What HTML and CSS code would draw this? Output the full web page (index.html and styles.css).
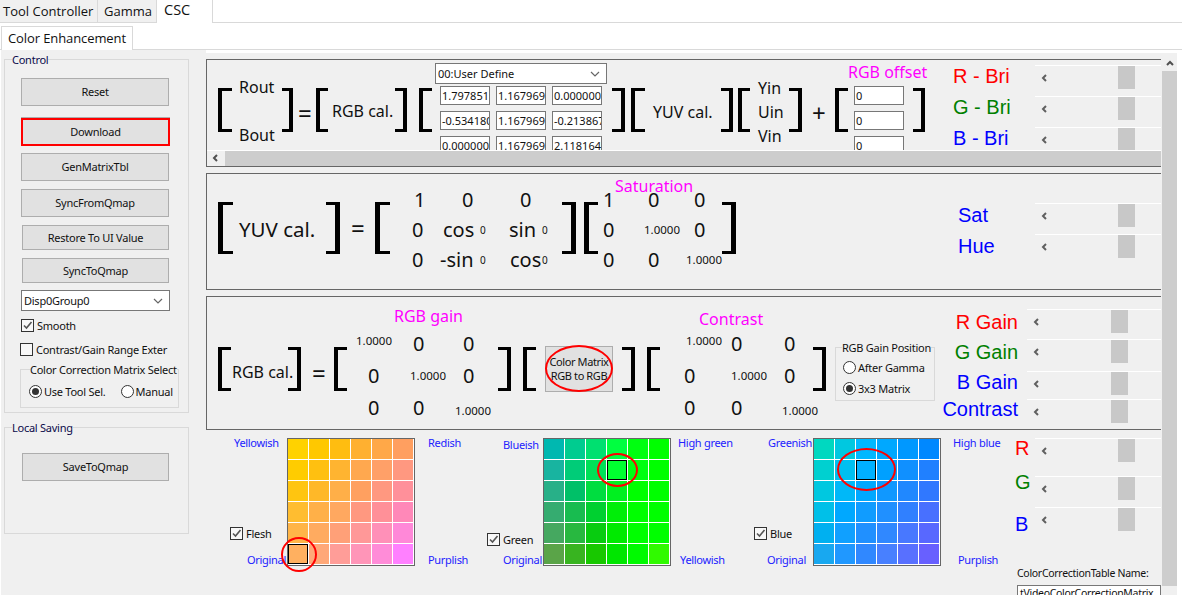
FILE: index.html
```html
<!DOCTYPE html>
<html lang="en">
<head>
<meta charset="utf-8">
<title>CSC - Color Enhancement</title>
<link rel="stylesheet" href="styles.css">
</head>
<body>
<div class="app">
  <div class="tabs">
    <div class="tab t-tool">Tool Controller</div>
    <div class="tab t-gamma">Gamma</div>
    <div class="tab active t-csc">CSC</div>
  </div>
  <div class="subtabs">
    <div class="subtab">Color Enhancement</div>
  </div>
  <div class="page">
    <aside class="sidebar">
      <fieldset class="group g-control">
        <legend>Control</legend>
        <button class="btn mt12">Reset</button>
        <button class="btn btn-red">Download</button>
        <button class="btn mt7">GenMatrixTbl</button>
        <button class="btn mt8">SyncFromQmap</button>
        <button class="btn btn-short mt8">Restore To UI Value</button>
        <button class="btn btn-short mt8">SyncToQmap</button>
        <div class="combo c-disp">Disp0Group0<svg class="chev" width="10" height="6" viewBox="0 0 10 6"><path d="M1 1 5 5 9 1" fill="none" stroke="#666" stroke-width="1.2"/></svg></div>
        <label class="check c-smooth"><span class="cb"><svg width="11" height="11" viewBox="0 0 11 11"><path d="M2 5.500 4.500 8 9.500 2" fill="none" stroke="#555" stroke-width="1.600"/></svg></span>Smooth</label>
        <label class="check c-range"><span class="cb"></span>Contrast/Gain Range Exter</label>
        <fieldset class="group g-matrix">
          <legend>Color Correction Matrix Select</legend>
          <div class="radios">
            <label class="radio"><span class="rd on"></span>Use Tool Sel.</label>
            <label class="radio r-manual"><span class="rd"></span>Manual</label>
          </div>
        </fieldset>
      </fieldset>
      <fieldset class="group g-local">
        <legend>Local Saving</legend>
        <button class="btn btn-save">SaveToQmap</button>
      </fieldset>
    </aside>

    <main class="content">
      <section class="panel p1">
        <div class="p1-clip">
          <div class="row">
            <i class="br ml11 w14"></i>
            <div class="stack ml7 w43 gap24 mt2"><span>Rout</span><span>Bout</span></div>
            <i class="br r w11"></i>
            <span class="op ml5 w13 mt6">=</span>
            <i class="br ml5 w12"></i>
            <span class="math ml4 w63 mt2">RGB cal.</span>
            <i class="br r w12"></i>
            <i class="br ml12 w13"></i>
            <div class="coef ml3">
              <div class="combo c-user">00:User Define<svg class="chev" width="10" height="6" viewBox="0 0 10 6"><path d="M1 1 5 5 9 1" fill="none" stroke="#666" stroke-width="1.2"/></svg></div>
              <div class="inputs">
                <span class="inp">1.797851</span><span class="inp">1.167969</span><span class="inp">0.000000</span>
                <span class="inp">-0.534180</span><span class="inp">1.167969</span><span class="inp">-0.213867</span>
                <span class="inp">0.000000</span><span class="inp">1.167969</span><span class="inp">2.118164</span>
              </div>
            </div>
            <i class="br r ml5 w13"></i>
            <i class="br ml6 w14"></i>
            <span class="math ml8 w60 mt4">YUV cal.</span>
            <i class="br r ml8 w12"></i>
            <i class="br ml5 w12"></i>
            <div class="stack ml8 w23 mt4"><span>Yin</span><span>Uin</span><span>Vin</span></div>
            <i class="br r ml8 w13"></i>
            <span class="op ml10 w13 mt6">+</span>
            <i class="br ml10 w13"></i>
            <div class="offset">
              <div class="title t-offset">RGB offset</div>
              <span class="inp off">0</span><span class="inp off">0</span><span class="inp off">0</span>
            </div>
            <i class="br r w12"></i>
            <div class="sliders s-bri">
              <div class="sl-row"><span class="lab red">R - Bri</span><div class="slider"><svg class="arr" width="6" height="8" viewBox="0 0 6 8"><path d="M5 1 2 4 5 7" fill="none" stroke="#606060" stroke-width="2"/></svg><b class="thumb"></b></div></div>
              <div class="sl-row"><span class="lab green">G - Bri</span><div class="slider"><svg class="arr" width="6" height="8" viewBox="0 0 6 8"><path d="M5 1 2 4 5 7" fill="none" stroke="#606060" stroke-width="2"/></svg><b class="thumb"></b></div></div>
              <div class="sl-row"><span class="lab blue">B - Bri</span><div class="slider"><svg class="arr" width="6" height="8" viewBox="0 0 6 8"><path d="M5 1 2 4 5 7" fill="none" stroke="#606060" stroke-width="2"/></svg><b class="thumb"></b></div></div>
            </div>
          </div>
        </div>
        <div class="hscroll"><svg class="harr" width="6" height="8" viewBox="0 0 6 8"><path d="M5 1 2 4 5 7" fill="none" stroke="#505050" stroke-width="2"/></svg><b class="hthumb"></b></div>
      </section>

      <section class="panel p2">
        <div class="row">
          <i class="br ml11 w15"></i>
          <span class="math big ml6 w87 mt2">YUV cal.</span>
          <i class="br r w14"></i>
          <span class="op ml11 w12">=</span>
          <i class="br ml12 w15"></i>
          <div class="mx mxa ml22">
            <span class="num i2">1</span><span class="num i22">0</span><span class="num i11">0</span>
            <span class="num">0</span><span class="num i3 fn"><em class="w37">cos</em><small>0</small></span><span class="num fn"><em class="w33">sin</em><small>0</small></span>
            <span class="num">0</span><span class="num fn"><em class="w40">-sin</em><small>0</small></span><span class="num i1 fn"><em class="w32">cos</em><small>0</small></span>
          </div>
          <i class="br r w14"></i>
          <i class="br ml8 w14"></i>
          <div class="satcol ml5">
            <div class="title t-sat">Saturation</div>
            <div class="mx mxb">
              <span class="num">1</span><span class="num i4">0</span><span class="num i8">0</span>
              <span class="num">0</span><span class="small">1.0000</span><span class="num i8">0</span>
              <span class="num">0</span><span class="num i4">0</span><span class="small">1.0000</span>
            </div>
          </div>
          <i class="br r w14"></i>
          <div class="sliders s-sat">
            <div class="sl-row"><span class="lab blue">Sat</span><div class="slider"><svg class="arr" width="6" height="8" viewBox="0 0 6 8"><path d="M5 1 2 4 5 7" fill="none" stroke="#606060" stroke-width="2"/></svg><b class="thumb"></b></div></div>
            <div class="sl-row"><span class="lab blue">Hue</span><div class="slider"><svg class="arr" width="6" height="8" viewBox="0 0 6 8"><path d="M5 1 2 4 5 7" fill="none" stroke="#606060" stroke-width="2"/></svg><b class="thumb"></b></div></div>
          </div>
        </div>
      </section>

      <section class="panel p3">
        <div class="row">
          <i class="br ml11 w13"></i>
          <span class="math ml1 w56 mt6">RGB cal.</span>
          <i class="br r w13"></i>
          <span class="op ml11 w12 mt8">=</span>
          <i class="br ml10 w13"></i>
          <div class="gaincol ml9">
            <div class="title t-gain">RGB gain</div>
            <div class="mx mxc">
              <span class="small up">1.0000</span><span class="num i3">0</span><span class="num i8">0</span>
              <span class="num i12">0</span><span class="small">1.0000</span><span class="num i8">0</span>
              <span class="num i12">0</span><span class="num i3">0</span><span class="small dn">1.0000</span>
            </div>
          </div>
          <i class="br r ml6 w13"></i>
          <i class="br ml12 w13"></i>
          <button class="cm-btn ml9">Color Matrix<br>RGB to RGB<span class="ring r-btn"></span></button>
          <i class="br r ml9 w13"></i>
          <i class="br ml12 w13"></i>
          <div class="concol ml24">
            <div class="title t-con">Contrast</div>
            <div class="mx mxd">
              <span class="small i2 up">1.0000</span><span class="num">0</span><span class="num i2">0</span>
              <span class="num">0</span><span class="small">1.0000</span><span class="num i2">0</span>
              <span class="num">0</span><span class="num">0</span><span class="small dn">1.0000</span>
            </div>
          </div>
          <i class="br r w13"></i>
          <fieldset class="group g-gain">
            <legend>RGB Gain Position</legend>
            <label class="radio"><span class="rd"></span>After Gamma</label>
            <label class="radio r-3x3"><span class="rd on"></span>3x3 Matrix</label>
          </fieldset>
          <div class="sliders s-gain">
            <div class="sl-row h30"><span class="lab red lh26">R Gain</span><div class="slider"><svg class="arr" width="6" height="8" viewBox="0 0 6 8"><path d="M5 1 2 4 5 7" fill="none" stroke="#606060" stroke-width="2"/></svg><b class="thumb"></b></div></div>
            <div class="sl-row h32"><span class="lab green lh26">G Gain</span><div class="slider"><svg class="arr" width="6" height="8" viewBox="0 0 6 8"><path d="M5 1 2 4 5 7" fill="none" stroke="#606060" stroke-width="2"/></svg><b class="thumb"></b></div></div>
            <div class="sl-row h28"><span class="lab blue lh22">B Gain</span><div class="slider"><svg class="arr" width="6" height="8" viewBox="0 0 6 8"><path d="M5 1 2 4 5 7" fill="none" stroke="#606060" stroke-width="2"/></svg><b class="thumb"></b></div></div>
            <div class="sl-row"><span class="lab blue lh20">Contrast</span><div class="slider"><svg class="arr" width="6" height="8" viewBox="0 0 6 8"><path d="M5 1 2 4 5 7" fill="none" stroke="#606060" stroke-width="2"/></svg><b class="thumb"></b></div></div>
          </div>
        </div>
      </section>

      <section class="bottom">
        <div class="block b1">
          <div class="side w57">
            <span class="hue-l ml4">Yellowish</span>
            <label class="check c-tone mb13"><span class="cb"><svg width="11" height="11" viewBox="0 0 11 11"><path d="M2 5.500 4.500 8 9.500 2" fill="none" stroke="#555" stroke-width="1.600"/></svg></span>Flesh</label>
            <span class="hue-l ml17">Original</span>
          </div>
          <div class="swatch">
            <span style="background:#ffd200"></span><span style="background:#ffc800"></span><span style="background:#ffbd10"></span><span style="background:#ffb030"></span><span style="background:#ffa848"></span><span style="background:#ff9f60"></span>
            <span style="background:#ffcc00"></span><span style="background:#ffc010"></span><span style="background:#ffb430"></span><span style="background:#ffa84f"></span><span style="background:#ffa068"></span><span style="background:#ff9880"></span>
            <span style="background:#ffc510"></span><span style="background:#ffb828"></span><span style="background:#ffaf48"></span><span style="background:#ffa060"></span><span style="background:#ff9880"></span><span style="background:#ff909a"></span>
            <span style="background:#ffbd30"></span><span style="background:#ffb048"></span><span style="background:#ffa860"></span><span style="background:#ff9880"></span><span style="background:#ff9098"></span><span style="background:#ff88b8"></span>
            <span style="background:#ffb548"></span><span style="background:#ffab60"></span><span style="background:#ffa078"></span><span style="background:#ff9898"></span><span style="background:#ff90b8"></span><span style="background:#ff88d8"></span>
            <span class="sel" style="background:#ffb060"></span><span style="background:#ffa878"></span><span style="background:#ff9d98"></span><span style="background:#ff95b8"></span><span style="background:#ff8cd8"></span><span style="background:#ff80ff"></span>
            <b class="ring r-flesh"></b>
          </div>
          <div class="side w72 pl13">
            <span class="hue-l">Redish</span>
            <span class="hue-l">Purplish</span>
          </div>
        </div>
        <div class="block b2">
          <div class="side w56">
            <span class="hue-l ml16 mt2">Blueish</span>
            <label class="check c-tone mb7"><span class="cb"><svg width="11" height="11" viewBox="0 0 11 11"><path d="M2 5.500 4.500 8 9.500 2" fill="none" stroke="#555" stroke-width="1.600"/></svg></span>Green</label>
            <span class="hue-l ml16">Original</span>
          </div>
          <div class="swatch">
            <span style="background:#00b8b0"></span><span style="background:#00cc90"></span><span style="background:#00e070"></span><span style="background:#00ff40"></span><span style="background:#00ff10"></span><span style="background:#00ff00"></span>
            <span style="background:#18b4a0"></span><span style="background:#00cc78"></span><span style="background:#00e058"></span><span class="sel" style="background:#00ff30"></span><span style="background:#00ff10"></span><span style="background:#00ff00"></span>
            <span style="background:#28b088"></span><span style="background:#00c068"></span><span style="background:#00dd40"></span><span style="background:#00f020"></span><span style="background:#00ff00"></span><span style="background:#00ff00"></span>
            <span style="background:#35ac70"></span><span style="background:#18bc50"></span><span style="background:#00d030"></span><span style="background:#00ee08"></span><span style="background:#00ff00"></span><span style="background:#00ff00"></span>
            <span style="background:#45a860"></span><span style="background:#28b840"></span><span style="background:#08cc10"></span><span style="background:#00ea00"></span><span style="background:#00ff00"></span><span style="background:#00ff00"></span>
            <span style="background:#5aa448"></span><span style="background:#38b420"></span><span style="background:#18c800"></span><span style="background:#00e600"></span><span style="background:#00fa00"></span><span style="background:#30fa00"></span>
            <b class="ring r-green"></b>
          </div>
          <div class="side w83 pl7">
            <span class="hue-l">High green</span>
            <span class="hue-l ml2">Yellowish</span>
          </div>
        </div>
        <div class="block b3">
          <div class="side w59">
            <span class="hue-l ml14">Greenish</span>
            <label class="check c-tone mb13"><span class="cb"><svg width="11" height="11" viewBox="0 0 11 11"><path d="M2 5.500 4.500 8 9.500 2" fill="none" stroke="#555" stroke-width="1.600"/></svg></span>Blue</label>
            <span class="hue-l ml13">Original</span>
          </div>
          <div class="swatch">
            <span style="background:#00d8c0"></span><span style="background:#00c8e0"></span><span style="background:#00b8ff"></span><span style="background:#00a8ff"></span><span style="background:#0098ff"></span><span style="background:#0088ff"></span>
            <span style="background:#00d0d0"></span><span style="background:#00c0f0"></span><span class="sel" style="background:#00b0ff"></span><span style="background:#00a0ff"></span><span style="background:#1090ff"></span><span style="background:#2080ff"></span>
            <span style="background:#00c8e0"></span><span style="background:#00b8f8"></span><span style="background:#00a8ff"></span><span style="background:#1098ff"></span><span style="background:#2088ff"></span><span style="background:#3078ff"></span>
            <span style="background:#00c0e8"></span><span style="background:#00a8ff"></span><span style="background:#109cff"></span><span style="background:#2090ff"></span><span style="background:#3080ff"></span><span style="background:#4870ff"></span>
            <span style="background:#00b0f0"></span><span style="background:#10a0ff"></span><span style="background:#2090ff"></span><span style="background:#3088ff"></span><span style="background:#4878ff"></span><span style="background:#5868ff"></span>
            <span style="background:#18a8f0"></span><span style="background:#2098ff"></span><span style="background:#3088ff"></span><span style="background:#4880ff"></span><span style="background:#5870ff"></span><span style="background:#6860ff"></span>
            <b class="ring r-blue"></b>
          </div>
          <div class="side w74 pl12">
            <span class="hue-l">High blue</span>
            <span class="hue-l ml5">Purplish</span>
          </div>
        </div>
        <div class="tail">
          <div class="tail-top">
            <div class="rgb-labs">
              <span class="lab red">R</span>
              <span class="lab green">G</span>
              <span class="lab blue">B</span>
            </div>
            <div class="rgb-sliders">
              <div class="slider h38"><svg class="arr" width="6" height="8" viewBox="0 0 6 8"><path d="M5 1 2 4 5 7" fill="none" stroke="#606060" stroke-width="2"/></svg><b class="thumb"></b></div>
              <div class="slider"><svg class="arr" width="6" height="8" viewBox="0 0 6 8"><path d="M5 1 2 4 5 7" fill="none" stroke="#606060" stroke-width="2"/></svg><b class="thumb"></b></div>
              <div class="slider"><svg class="arr" width="6" height="8" viewBox="0 0 6 8"><path d="M5 1 2 4 5 7" fill="none" stroke="#606060" stroke-width="2"/></svg><b class="thumb"></b></div>
            </div>
          </div>
          <div class="tbl-name">ColorCorrectionTable Name:</div>
          <div class="tbl-input">tVideoColorCorrectionMatrix</div>
        </div>
      </section>
    </main>

    <div class="vscroll">
      <svg class="varr" width="8" height="6" viewBox="0 0 8 6"><path d="M1 5 4 2 7 5" fill="none" stroke="#505050" stroke-width="2"/></svg>
      <b class="vthumb"></b>
    </div>
  </div>
</div>
</body>
</html>
```

FILE: styles.css
```css
* { box-sizing: border-box; }
html, body { margin: 0; padding: 0; background: #fff; }
body { font-family: "Noto Sans", "Open Sans", sans-serif; color: #000; }
.app { width: 1182px; height: 595px; overflow: hidden; background: #fff; display: flex; flex-direction: column; }

/* tabs */
.tabs { display: flex; height: 23px; border-bottom: 1px solid #d9d9d9; flex: none; }
.tab { height: 22px; font: 13px/22px "Open Sans", sans-serif; background: #f0f0f0; border: 1px solid #d9d9d9; border-width: 0 1px 0 0; padding-left: 3px; color: #111; }
.t-tool { width: 98px; }
.t-gamma { width: 59px; padding-left: 6px; }
.tab.active { background: #fff; width: 56px; height: 23px; padding-left: 7px; font-size: 14.500px; line-height: 19px; }
.subtabs { height: 27px; flex: none; display: flex; align-items: flex-end; border-bottom: 1px solid #d9d9d9; padding: 0 0 0 1px; }
.subtab { width: 132px; height: 24px; margin-bottom: -1px; background: #fff; border: 1px solid #d9d9d9; border-bottom: 0; font: 13px/22px "Open Sans", sans-serif; letter-spacing: -0.1px; padding-left: 6px; color: #111; }

/* page */
.page { flex: 1; display: flex; margin: 0 5px 0 1px; background: #f0f0f0; min-height: 0; }
.sidebar { width: 205px; flex: none; padding: 3px 0 0 3px; font-size: 11px; letter-spacing: -0.25px; }
.content { width: 956px; flex: none; border-top: 3px solid #fff; }
.vscroll { width: 15px; flex: none; display: flex; flex-direction: column; border-top: 3px solid #fff; }
.varr { margin: 7px 0 5px 4px; flex: none; }
.vthumb { display: block; height: 515px; background: #cdcdcd; }

/* groups */
.group { margin: 0; padding: 0; border: 1px solid #d9d9d9; font-size: 11px; line-height: 13px; min-width: 0; letter-spacing: -0.25px; }
.group legend { padding: 0; margin-left: 7px; color: #0a0a4a; line-height: 13px; white-space: nowrap; }
.g-control { width: 185px; height: 360px; padding: 0 0 0 16px; display: flex; flex-direction: column; align-items: flex-start; }
.g-control > legend { margin-left: -9px; }
.g-local { width: 185px; height: 113px; margin-top: 8px; padding: 0 0 0 17px; }
.g-local > legend { margin-left: -10px; }
.g-matrix { width: 159px; height: 45px; margin: 7px 0 0 -1px; }
.g-matrix > legend { margin-left: 9px; color: #111; }
.g-gain { width: 100px; height: 60px; margin: 44px 0 0 9px; align-self: flex-start; padding-left: 7px; flex: none; }
.g-gain > legend { margin-left: -1px; color: #111; }

/* buttons */
.btn { display: block; width: 148px; height: 28px; background: #e1e1e1; border: 1px solid #adadad; padding: 0; font: 11px/14px "Noto Sans", sans-serif; letter-spacing: -0.25px; color: #111; flex: none; }
.btn-red { width: 149px; margin-top: 12px; border: 2px solid #f00; box-shadow: 0 -1px 0 #adadad; }
.btn-short { width: 147px; height: 25px; margin-left: 1px; }
.btn-save { margin: 19px 0 0 0; width: 147px; }
.cm-btn { position: relative; width: 68px; height: 46px; flex: none; align-self: flex-start; margin-top: 49px; background: #e1e1e1; border: 1px solid #adadad; padding: 0; font: 11px/14px "Noto Sans", sans-serif; letter-spacing: -0.4px; color: #111; }

/* form bits */
.combo { display: flex; align-items: center; justify-content: space-between; background: #fff; border: 1px solid #777; font-size: 11px; padding: 0 6px 0 2px; flex: none; color: #111; }
.c-disp { width: 149px; height: 21px; margin-top: 7px; }
.c-user { width: 172px; height: 21px; }
.check, .radio { display: flex; align-items: center; font-size: 11px; line-height: 13px; white-space: nowrap; color: #111; letter-spacing: -0.25px; }
.cb { width: 13px; height: 13px; border: 1px solid #333; background: #f8f8f8; display: inline-block; flex: none; margin-right: 3px; }
.cb svg { display: block; margin: 0; }
.c-smooth { margin-top: 8px; height: 13px; }
.c-range { margin: 11px 0 0 -1px; height: 13px; }
.rd { width: 13px; height: 13px; border: 1px solid #333; border-radius: 50%; background: #fff; display: inline-block; flex: none; margin-right: 2px; position: relative; }
.rd.on::after { content: ""; display: block; width: 7px; height: 7px; margin: 2px; border-radius: 50%; background: #333; }
.radios { display: flex; padding: 9px 0 0 8px; }
.r-manual { margin-left: 15px; }
.g-gain .radio { margin-top: 7px; height: 13px; }
.g-gain .r-3x3 { margin-top: 8px; }

/* panels */
.panel { width: 955px; margin-top: 6px; border: 1px solid #666; border-right: 0; position: relative; }
.p1 { height: 108px; }
.p2 { height: 117px; }
.p3 { height: 134px; }
.p1-clip { height: 90px; overflow: hidden; }
.row { display: flex; align-items: center; }
.p1 .row { height: 100px; }
.p2 .row { height: 108px; }
.p3 .row { height: 144px; }
.br { display: block; flex: none; border: solid #000; border-width: 3px 0 3px 4px; height: 44px; }
.br.r { border-width: 3px 4px 3px 0; }
.p2 .br { height: 52px; border-left-width: 5px; }
.p2 .br.r { border-left-width: 0; border-right-width: 5px; }
.math { font-size: 16px; line-height: 24px; white-space: nowrap; flex: none; color: #111; }
.math.big { font-size: 20.500px; }
.stack { display: flex; flex-direction: column; font-size: 16px; line-height: 24px; flex: none; color: #111; }
.gap24 { gap: 24px; }
.op { font-size: 24px; line-height: 24px; text-align: center; flex: none; color: #111; }

.coef { align-self: flex-start; margin-top: 3px; flex: none; width: 172px; }
.inputs { display: grid; grid-template-columns: repeat(3, 50px); gap: 6px; margin: 2px 0 0 5px; }
.inp { display: block; height: 19px; border: 1px solid #777; background: #fff; font: 11px/17px "Noto Sans", sans-serif; overflow: hidden; white-space: nowrap; padding-left: 1px; color: #111; }
.offset { align-self: flex-start; flex: none; width: 65px; margin-top: 4px; }
.off { width: 50px; margin: 0 0 6px 6px; }
.title { color: #ff00ff; white-space: nowrap; }
.t-offset { font-size: 16px; line-height: 16px; height: 22px; }
.t-sat { font-size: 16px; line-height: 12px; margin: 0 0 -7px 12px; }
.t-gain { font-size: 16px; line-height: 18px; margin: 0 0 2px 38px; }
.t-con { font-size: 16px; line-height: 15px; margin-left: 15px; }

/* matrices */
.mx { display: grid; font-size: 20px; align-items: center; }
.mx > * { display: block; white-space: nowrap; }
.num { line-height: 16px; color: #111; }
.small { font-size: 11.500px; line-height: 14px; color: #111; }
.fn { display: flex !important; align-items: center; }
.fn em { font-style: normal; display: block; flex: none; }
.fn small { font-size: 10px; color: #111; }
.mxa { grid-template-columns: 28px 69px 53px; grid-auto-rows: 30px; align-self: flex-start; margin-top: 11px; flex: none; }
.satcol { align-self: flex-start; margin-top: 6px; width: 119px; flex: none; }
.mxb { grid-template-columns: 41px 42px 36px; grid-auto-rows: 30px; }
.gaincol { align-self: flex-start; margin-top: 10px; width: 136px; flex: none; }
.concol { align-self: flex-start; margin-top: 15px; width: 129px; flex: none; }
.mxc { grid-template-columns: 54px 45px 37px; grid-template-rows: 33px 32px 32px; }
.mxd { grid-template-columns: 47px 51px 31px; grid-template-rows: 33px 32px 32px; }
.up { margin-bottom: 6px; }
.dn { margin-top: 6px; }

/* sliders */
.sliders { flex: none; align-self: flex-start; margin-left: auto; }
.sl-row { display: flex; height: 31px; }
.s-bri { margin-top: 5px; width: 208px; }
.s-bri .lab { width: 82px; line-height: 22px; }
.s-sat { margin-top: 29px; width: 203px; }
.s-sat .lab { width: 77px; line-height: 25px; }
.s-gain { margin-top: 12px; width: 226px; }
.s-gain .lab { width: 92px; padding-right: 9px; text-align: right; }
.s-gain .slider { width: 134px; }
.s-gain .thumb { margin-left: 72px; }
.s-gain .arr { margin-left: 6px; }
.h30 { height: 30px; }
.h32 { height: 32px; }
.h28 { height: 28px; }
.lab { font: 20px/22px "Liberation Sans", Arial, sans-serif; flex: none; white-space: nowrap; display: block; }
.s-gain .lh26 { line-height: 26px; }
.s-gain .lh22 { line-height: 22px; }
.s-gain .lh20 { line-height: 20px; }
.red { color: #f00; }
.green { color: #008000; }
.blue { color: #00f; }
.slider { width: 126px; height: 31px; border-top: 1px solid #fff; display: flex; align-items: flex-start; flex: none; }
.h38 { height: 38px; }
.arr { margin: 8px 0 0 6px; flex: none; }
.thumb { display: block; width: 17px; height: 23px; background: #c8c8c8; margin-left: 71px; flex: none; }

.hscroll { height: 16px; border-top: 1px solid #fff; display: flex; align-items: stretch; }
.harr { margin: 3px 7px 0 5px; flex: none; }
.hthumb { display: block; flex: 1; background: #cdcdcd; }

/* bottom */
.bottom { display: flex; margin: 6px 0 0 24px; }
.block { display: flex; flex: none; height: 131px; }
.side { display: flex; flex-direction: column; align-items: flex-start; justify-content: space-between; height: 131px; flex: none; }
.hue-l { font-size: 11px; line-height: 14px; color: #2222ff; white-space: nowrap; display: block; letter-spacing: -0.3px; }
.c-tone { margin-top: auto; height: 13px; }
.swatch { position: relative; display: grid; grid-template-columns: repeat(6, 20px); grid-auto-rows: 20px; gap: 1px; width: 128px; height: 128px; margin-top: 2px; background: #fff; border: 1px solid #666; flex: none; align-content: start; }
.swatch span { display: block; }
.swatch .sel { border: 1px solid #000; }
.ring { position: absolute; border: 2px solid #f00; border-radius: 50%; display: block; }
.r-btn { left: -1px; top: -2px; width: 68px; height: 47px; }
.r-flesh { left: -7px; top: 98px; width: 36px; height: 35px; }
.r-green { left: 53px; top: 14px; width: 41px; height: 34px; }
.r-blue { left: 23px; top: 9px; width: 59px; height: 43px; }
.tail { width: 147px; flex: none; }
.tail-top { display: flex; height: 130px; }
.rgb-labs { width: 20px; flex: none; display: flex; flex-direction: column; padding-top: 1px; }
.rgb-labs .green { margin-top: 12px; }
.rgb-labs .blue { margin-top: 20px; }
.rgb-sliders { padding-top: 2px; flex: none; }
.tbl-name { font-size: 10.500px; line-height: 14px; margin-left: 2px; color: #111; white-space: nowrap; letter-spacing: -0.3px; }
.tbl-input { height: 22px; margin: 5px 0 0 2px; width: 144px; background: #fff; border: 1px solid #777; font-size: 10.500px; line-height: 14px; padding-left: 2px; overflow: hidden; white-space: nowrap; color: #111; letter-spacing: -0.3px; }

/* spacing helpers */
.ml1{margin-left:1px}.ml2{margin-left:2px}.ml3{margin-left:3px}.ml4{margin-left:4px}.ml5{margin-left:5px}.ml6{margin-left:6px}.ml7{margin-left:7px}.ml8{margin-left:8px}.ml9{margin-left:9px}.ml10{margin-left:10px}.ml11{margin-left:11px}.ml12{margin-left:12px}.ml13{margin-left:13px}.ml14{margin-left:14px}.ml16{margin-left:16px}.ml17{margin-left:17px}.ml22{margin-left:22px}.ml24{margin-left:24px}
.i1{margin-left:1px}.i2{margin-left:2px}.i3{margin-left:3px}.i4{margin-left:4px}.i8{margin-left:8px}.i11{margin-left:11px}.i12{margin-left:12px}.i22{margin-left:22px}
.w11{width:11px}.w12{width:12px}.w13{width:13px}.w14{width:14px}.w15{width:15px}.w23{width:23px}.w32{width:32px}.w33{width:33px}.w37{width:37px}.w40{width:40px}.w43{width:43px}.w56{width:56px}.w57{width:57px}.w59{width:59px}.w60{width:60px}.w63{width:63px}.w72{width:72px}.w74{width:74px}.w83{width:83px}.w87{width:87px}
.mt2{margin-top:2px}.mt4{margin-top:4px}.mt6{margin-top:6px}.mt7{margin-top:7px}.mt8{margin-top:8px}.mt12{margin-top:12px}.mb7{margin-bottom:7px}.mb13{margin-bottom:13px}
.pl7{padding-left:7px}.pl12{padding-left:12px}.pl13{padding-left:13px}
```
